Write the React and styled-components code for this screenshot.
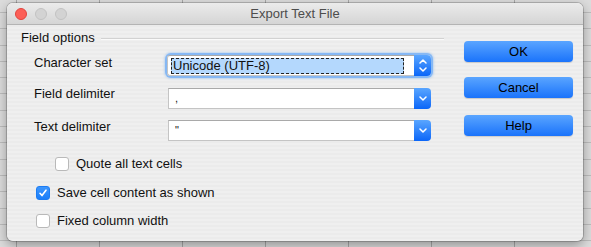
import React from "react";
import styled, { createGlobalStyle } from "styled-components";

const GlobalStyle = createGlobalStyle`
  html, body {
    margin: 0;
    padding: 0;
  }
  body {
    width: 591px;
    height: 247px;
    overflow: hidden;
    font-family: "Liberation Sans", Arial, sans-serif;
    font-size: 13px;
    color: #111;
    background-color: #dcdcdc;
    background-image:
      repeating-linear-gradient(to right, transparent 0 16px, #a8a8a8 16px 17px, transparent 17px 83px),
      repeating-linear-gradient(to bottom, transparent 0 12px, #bdbdbd 12px 13px, transparent 13px 16.3px);
  }
`;

const Desktop = styled.div`
  width: 591px;
  height: 247px;
  padding: 3px 0 0 7px;
  box-sizing: border-box;
`;

const Window = styled.div`
  width: 576px;
  height: 238px;
  border-radius: 6px;
  overflow: hidden;
  display: flex;
  flex-direction: column;
  background: repeating-linear-gradient(to bottom, #efefef 0 2px, #ebebeb 2px 4px);
  box-shadow: 0 0 0 1px rgba(0, 0, 0, 0.18), 0 4px 12px rgba(0, 0, 0, 0.35);
`;

const TitleBar = styled.div`
  height: 21px;
  flex: none;
  display: flex;
  align-items: center;
  padding-left: 8px;
  position: relative;
  background: linear-gradient(to bottom, #ebebeb, #d5d5d5);
  border-bottom: 1px solid #b4b4b4;
`;

const Lights = styled.div`
  display: flex;
  gap: 8px;
`;

const Light = styled.span`
  width: 12px;
  height: 12px;
  border-radius: 50%;
  box-sizing: border-box;
  background: ${(p) => (p.$red ? "#fc5f57" : "#d3d3d3")};
  border: 1px solid ${(p) => (p.$red ? "#e0443e" : "#c2c2c2")};
`;

const Title = styled.div`
  position: absolute;
  left: 0;
  right: 0;
  top: 3px;
  text-align: center;
  color: #4d4d4d;
  font-size: 13px;
  pointer-events: none;
`;

const Body = styled.div`
  flex: 1;
  display: flex;
  padding: 5px 10px 0 14px;
`;

const Options = styled.div`
  width: 423px;
  display: flex;
  flex-direction: column;
`;

const GroupHeader = styled.div`
  display: flex;
  align-items: center;
  height: 16px;
  line-height: 16px;
  gap: 6px;
`;

const Rule = styled.div`
  flex: 1;
  height: 1px;
  background: #d2d2d2;
  border-bottom: 1px solid #fafafa;
  margin-top: 1px;
`;

const FieldRow = styled.div`
  display: flex;
  align-items: flex-start;
  margin-top: ${(p) => p.$top}px;
  padding-left: 13px;
`;

const Label = styled.div`
  width: 134px;
  line-height: 16px;
  margin-top: ${(p) => p.$offset || 0}px;
`;

const ComboShell = styled.div`
  width: 264px;
  height: 21px;
  display: flex;
  border-radius: 4px;
  box-shadow: 0 0 0 2px #86b8f4, 0 0 2px 3px rgba(126, 179, 243, 0.4);
  background: #fff;
  margin-left: -1px;
`;

const InputShell = styled.div`
  width: 263px;
  height: 21px;
  display: flex;
`;

const Field = styled.div`
  flex: 1;
  box-sizing: border-box;
  background: #fff;
  color: #111;
  border: 1px solid #c4c4c4;
  border-top-color: #a9a9a9;
  border-right: none;
  border-radius: ${(p) => (p.$focus ? "3px 0 0 3px" : "0")};
  padding: ${(p) => (p.$focus ? "2px 10px 2px 3px" : "1px 6px")};
  display: flex;
  align-items: center;
  font-size: ${(p) => (p.$small ? "11px" : "13px")};
  line-height: 15px;
`;

const Selection = styled.div`
  flex: 1;
  height: 16px;
  box-sizing: border-box;
  background: #b4d8fd;
  border: 1px dashed #222;
  line-height: 14px;
  padding-left: 1px;
`;

const BlueKnob = styled.div`
  width: 17px;
  flex: none;
  display: flex;
  align-items: center;
  justify-content: center;
  border-radius: 0 4px 4px 0;
  background: linear-gradient(to bottom, #5aa6ff, #0b66f8);
`;

const CheckRow = styled.label`
  display: flex;
  align-items: center;
  gap: 7px;
  margin-top: ${(p) => p.$top}px;
  padding-left: ${(p) => p.$indent}px;
  line-height: 16px;
`;

const Box = styled.span`
  width: 14px;
  height: 14px;
  box-sizing: border-box;
  border-radius: 3px;
  flex: none;
  display: flex;
  align-items: center;
  justify-content: center;
  background: ${(p) => (p.$checked ? "linear-gradient(#3d96fd, #1a7ef9)" : "#fff")};
  border: 1px solid ${(p) => (p.$checked ? "#1c7cf3" : "#b9b9b9")};
`;

const Buttons = styled.div`
  margin-left: auto;
  width: 109px;
  display: flex;
  flex-direction: column;
  padding-top: 11px;
`;

const Button = styled.div`
  height: 21px;
  margin-top: ${(p) => p.$top || 0}px;
  border-radius: 4px;
  background: linear-gradient(to bottom, #5aa5ff, #1a73fb);
  box-shadow: 0 1px 1px rgba(0, 0, 0, 0.15);
  display: flex;
  align-items: center;
  justify-content: center;
  cursor: default;
`;

const ButtonText = styled.span`
  color: #000;
  -webkit-text-fill-color: #000;
  -webkit-font-smoothing: antialiased;
  font-size: 13px;
  line-height: 16px;
`;

const Chevron = ({ up }) => (
  <svg width="8" height="5" viewBox="0 0 8 5">
    <path
      d={up ? "M1 4 L4 1 L7 4" : "M1 1 L4 4 L7 1"}
      fill="none"
      stroke="#fff"
      strokeWidth="1.5"
      strokeLinecap="round"
      strokeLinejoin="round"
    />
  </svg>
);

const Stepper = styled.div`
  display: flex;
  flex-direction: column;
  gap: 3px;
`;

const Check = () => (
  <svg width="10" height="10" viewBox="0 0 10 10">
    <path d="M2 5.3 L4 7.6 L8 2.2" fill="none" stroke="#fff" strokeWidth="1.6" strokeLinecap="round" strokeLinejoin="round" />
  </svg>
);

const App = () => {
  return (
    <>
      <GlobalStyle />
      <Desktop>
        <Window>
          <TitleBar>
            <Lights>
              <Light $red />
              <Light />
              <Light />
            </Lights>
            <Title>Export Text File</Title>
          </TitleBar>
          <Body>
            <Options>
              <GroupHeader>
                <span>Field options</span>
                <Rule />
              </GroupHeader>
              <FieldRow $top={9}>
                <Label $offset={0}>Character set</Label>
                <ComboShell>
                  <Field $focus>
                    <Selection>Unicode (UTF-8)</Selection>
                  </Field>
                  <BlueKnob>
                    <Stepper>
                      <Chevron up />
                      <Chevron />
                    </Stepper>
                  </BlueKnob>
                </ComboShell>
              </FieldRow>
              <FieldRow $top={12}>
                <Label $offset={-2}>Field delimiter</Label>
                <InputShell>
                  <Field $small>,</Field>
                  <BlueKnob>
                    <Chevron />
                  </BlueKnob>
                </InputShell>
              </FieldRow>
              <FieldRow $top={11}>
                <Label $offset={-1}>Text delimiter</Label>
                <InputShell>
                  <Field $small>"</Field>
                  <BlueKnob>
                    <Chevron />
                  </BlueKnob>
                </InputShell>
              </FieldRow>
              <CheckRow $top={15} $indent={34}>
                <Box />
                <span>Quote all text cells</span>
              </CheckRow>
              <CheckRow $top={13} $indent={15}>
                <Box $checked>
                  <Check />
                </Box>
                <span>Save cell content as shown</span>
              </CheckRow>
              <CheckRow $top={12} $indent={15}>
                <Box />
                <span>Fixed column width</span>
              </CheckRow>
            </Options>
            <Buttons>
              <Button role="button">
                <ButtonText>OK</ButtonText>
              </Button>
              <Button role="button" $top={15}>
                <ButtonText>Cancel</ButtonText>
              </Button>
              <Button role="button" $top={17}>
                <ButtonText>Help</ButtonText>
              </Button>
            </Buttons>
          </Body>
        </Window>
      </Desktop>
    </>
  );
};

export default App;
